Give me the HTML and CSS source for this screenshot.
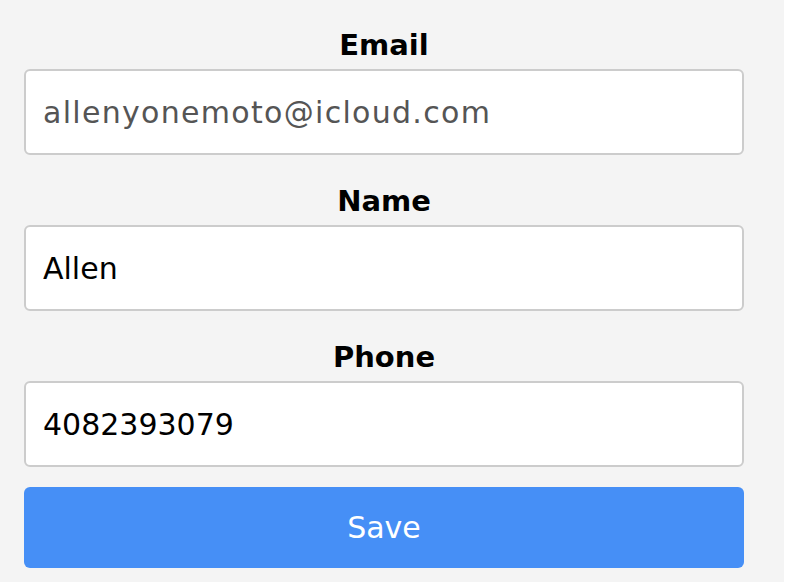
FILE: index.html
```html
<!DOCTYPE html>
<html lang="en">
<head>
<meta charset="utf-8">
<title>Profile</title>
<link rel="stylesheet" href="styles.css">
</head>
<body>
<div class="page">
  <form class="form">
    <div class="fields">
      <div class="field">
        <label class="label" for="email">Email</label>
        <input class="input input-muted" id="email" type="text" value="allenyonemoto@icloud.com" readonly>
      </div>
      <div class="field">
        <label class="label" for="name">Name</label>
        <input class="input" id="name" type="text" value="Allen">
      </div>
      <div class="field">
        <label class="label" for="phone">Phone</label>
        <input class="input" id="phone" type="text" value="4082393079">
      </div>
    </div>
    <button class="save" type="button">Save</button>
  </form>
</div>
</body>
</html>
```

FILE: styles.css
```css
html, body {
  margin: 0;
  padding: 0;
  background: #ffffff;
}

.page {
  width: 784px;
  min-height: 582px;
  background: #f4f4f4;
  font-family: "DejaVu Sans", "Open Sans", sans-serif;
}

.form {
  width: 768px;
  box-sizing: border-box;
  padding: 24px 24px 0;
  display: flex;
  flex-direction: column;
}

.fields {
  display: flex;
  flex-direction: column;
  gap: 25px;
}

.field {
  display: flex;
  flex-direction: column;
  gap: 3px;
}

.label {
  display: block;
  text-align: center;
  font-weight: 700;
  font-size: 29px;
  line-height: 42px;
  color: #000;
}

.input {
  display: block;
  width: 100%;
  height: 86px;
  box-sizing: border-box;
  margin: 0;
  padding: 0 17px;
  border: 2px solid #cccccc;
  border-radius: 6px;
  background: #ffffff;
  font-family: "DejaVu Sans", "Open Sans", sans-serif;
  font-size: 30px;
  color: #000;
  outline: none;
}

.input-muted {
  color: #555555;
  letter-spacing: 1.3px;
}

.save {
  margin-top: 20px;
  height: 81px;
  border: none;
  border-radius: 6px;
  background: #468ff6;
  color: #ffffff;
  font-family: "DejaVu Sans", "Open Sans", sans-serif;
  font-size: 30px;
  cursor: pointer;
}
```
